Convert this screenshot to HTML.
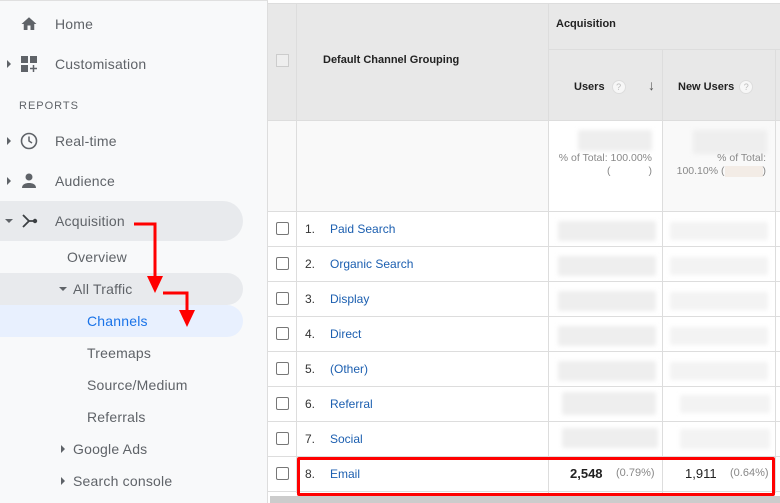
<!DOCTYPE html>
<html><head><meta charset="utf-8"><style>
*{margin:0;padding:0;box-sizing:border-box}
body{width:780px;height:503px;overflow:hidden;background:#fff;font-family:"Liberation Sans",Arial,sans-serif;position:relative}
.sb{position:absolute;left:0;top:0;width:268px;height:503px;background:#f8f9fa;border-right:1px solid #ddd;border-top:1px solid #e0e0e0}
.t{position:absolute;font-size:14px;color:#5f6368;letter-spacing:.2px;white-space:nowrap}
.pill{position:absolute;left:0;width:243px;border-radius:0 20px 20px 0}
.tri{position:absolute;width:0;height:0}
.tr{border-top:4px solid transparent;border-bottom:4px solid transparent;border-left:4px solid #5f6368}
.td{border-left:4px solid transparent;border-right:4px solid transparent;border-top:4px solid #5f6368}
.a{position:absolute;font-size:12px}
.cb{position:absolute;left:276px;width:13px;height:13px;border:1.5px solid #777;border-radius:2px;background:#fff}
.blur{position:absolute;background:#eee;filter:blur(2px);border-radius:2px}
.hl{position:absolute;left:0;width:780px;height:1px;background:#ddd}
.vl{position:absolute;width:1px;background:#ddd}
.q{display:inline-block;width:14px;height:14px;border-radius:7px;background:#f7f7f7;border:1px solid #ddd;color:#bbb;font-size:9px;text-align:center;line-height:12px;font-weight:normal;vertical-align:middle}
</style></head><body>
<div class="sb"></div>
<div class="pill" style="top:201px;height:40px;background:#e8eaed"></div>
<div class="pill" style="top:273px;height:32px;background:#e8eaed"></div>
<div class="pill" style="top:305px;height:32px;background:#e8f0fe"></div>

<svg style="position:absolute;left:20px;top:15px" width="18" height="18" viewBox="0 0 24 24"><path d="M10 20v-6h4v6h5v-8h3L12 3 2 12h3v8z" fill="#5f6368"/></svg>
<div class="t" style="left:55px;top:16px">Home</div>
<div class="tri tr" style="left:7px;top:60px"></div>
<svg style="position:absolute;left:20px;top:55px" width="18" height="18" viewBox="0 0 18 18"><rect x="1" y="1" width="7" height="7" fill="#5f6368"/><rect x="10" y="1" width="7" height="7" fill="#5f6368"/><rect x="1" y="10" width="7" height="7" fill="#5f6368"/><path d="M13.5 10v7M10 13.5h7" stroke="#5f6368" stroke-width="1.5"/></svg>
<div class="t" style="left:55px;top:56px">Customisation</div>
<div class="t" style="left:19px;top:100px;font-size:11px;letter-spacing:1px">REPORTS</div>
<div class="tri tr" style="left:7px;top:137px"></div>
<svg style="position:absolute;left:20px;top:132px" width="18" height="18" viewBox="0 0 18 18"><circle cx="9" cy="9" r="7.5" fill="none" stroke="#5f6368" stroke-width="1.6"/><path d="M9 4.5V9l3 2" fill="none" stroke="#5f6368" stroke-width="1.5"/></svg>
<div class="t" style="left:55px;top:133px">Real-time</div>
<div class="tri tr" style="left:7px;top:177px"></div>
<svg style="position:absolute;left:20px;top:172px" width="18" height="18" viewBox="0 0 18 18"><circle cx="9" cy="5" r="3.5" fill="#5f6368"/><path d="M2 16c0-4 4-5 7-5s7 1 7 5z" fill="#5f6368"/></svg>
<div class="t" style="left:55px;top:173px">Audience</div>
<div class="tri td" style="left:5px;top:219px"></div>
<svg style="position:absolute;left:20px;top:212px" width="18" height="18" viewBox="0 0 18 18"><path d="M3 3l6 6-6 6M9 9h6" fill="none" stroke="#3c4043" stroke-width="1.8"/><circle cx="15" cy="9" r="2.2" fill="#3c4043"/></svg>
<div class="t" style="left:55px;top:213px">Acquisition</div>
<div class="t" style="left:67px;top:249px">Overview</div>
<div class="tri td" style="left:59px;top:287px"></div>
<div class="t" style="left:73px;top:281px">All Traffic</div>
<div class="t" style="left:87px;top:313px;color:#1a73e8">Channels</div>
<div class="t" style="left:87px;top:345px">Treemaps</div>
<div class="t" style="left:87px;top:377px">Source/Medium</div>
<div class="t" style="left:87px;top:409px">Referrals</div>
<div class="tri tr" style="left:61px;top:445px"></div>
<div class="t" style="left:73px;top:441px">Google Ads</div>
<div class="tri tr" style="left:61px;top:477px"></div>
<div class="t" style="left:73px;top:473px">Search console</div>

<svg style="position:absolute;left:0;top:0" width="268" height="503"><path d="M134 224H155V278" fill="none" stroke="#f00" stroke-width="3"/><path d="M147 276h16l-8 17z" fill="#f00"/><path d="M163 293H187V312" fill="none" stroke="#f00" stroke-width="3"/><path d="M179 310h16l-8 17z" fill="#f00"/></svg>

<div style="position:absolute;left:268px;top:3px;width:512px;height:117px;background:#e8e8e8"></div>
<div style="position:absolute;left:268px;top:120px;width:512px;height:91px;background:#f9f9f9"></div>
<div style="position:absolute;left:548px;top:120px;width:114px;height:91px;background:#fff"></div>
<div class="hl" style="left:268px;top:3px"></div>
<div class="hl" style="left:548px;top:49px;width:232px"></div>
<div class="hl" style="left:268px;top:120px"></div>
<div class="hl" style="left:268px;top:211px"></div>
<div class="hl" style="left:268px;top:246px"></div>
<div class="hl" style="left:268px;top:281px"></div>
<div class="hl" style="left:268px;top:316px"></div>
<div class="hl" style="left:268px;top:351px"></div>
<div class="hl" style="left:268px;top:386px"></div>
<div class="hl" style="left:268px;top:421px"></div>
<div class="hl" style="left:268px;top:456px"></div>
<div class="hl" style="left:268px;top:491px"></div>
<div class="vl" style="left:296px;top:3px;height:490px"></div>
<div class="vl" style="left:548px;top:3px;height:490px"></div>
<div class="vl" style="left:662px;top:49px;height:444px"></div>
<div class="vl" style="left:775px;top:49px;height:444px"></div>
<div style="position:absolute;left:270px;top:496px;width:510px;height:7px;background:#ccc"></div>
<div style="position:absolute;left:276px;top:54px;width:13px;height:13px;border:1px solid #ccc;background:#eee"></div>
<div class="a" style="left:323px;top:54px;font-weight:bold;color:#222;font-size:11px">Default Channel Grouping</div>
<div class="a" style="left:556px;top:18px;font-weight:bold;color:#222;font-size:11px">Acquisition</div>
<div class="a" style="left:574px;top:80px;font-weight:bold;color:#222;font-size:11px">Users <span class="q" style="margin-left:4px">?</span></div>
<div class="a" style="left:648px;top:77px;color:#555;font-size:14px;font-weight:bold">↓</div>
<div class="a" style="left:678px;top:80px;font-weight:bold;color:#222;font-size:11px">New Users <span class="q" style="margin-left:2px">?</span></div>
<div class="blur" style="left:578px;top:130px;width:74px;height:21px"></div>
<div class="blur" style="left:693px;top:130px;width:74px;height:24px"></div>
<div class="a" style="left:556px;top:152px;color:#888;font-size:10.5px;text-align:right;width:96px;line-height:13px">% of Total: 100.00%<br>(<span style="display:inline-block;width:38px"></span>)</div>
<div class="a" style="left:670px;top:152px;color:#888;font-size:10.5px;text-align:right;width:96px;line-height:13px">% of Total:<br>100.10% (<span style="display:inline-block;width:38px;background:#f3ece6;height:11px;vertical-align:middle"></span>)</div>

<div class="cb" style="top:222px"></div><div class="a" style="left:305px;top:222px;color:#333">1.</div><div class="a" style="left:330px;top:222px;color:#1c5fb0">Paid Search</div>
<div class="cb" style="top:257px"></div><div class="a" style="left:305px;top:257px;color:#333">2.</div><div class="a" style="left:330px;top:257px;color:#1c5fb0">Organic Search</div>
<div class="cb" style="top:292px"></div><div class="a" style="left:305px;top:292px;color:#333">3.</div><div class="a" style="left:330px;top:292px;color:#1c5fb0">Display</div>
<div class="cb" style="top:327px"></div><div class="a" style="left:305px;top:327px;color:#333">4.</div><div class="a" style="left:330px;top:327px;color:#1c5fb0">Direct</div>
<div class="cb" style="top:362px"></div><div class="a" style="left:305px;top:362px;color:#333">5.</div><div class="a" style="left:330px;top:362px;color:#1c5fb0">(Other)</div>
<div class="cb" style="top:397px"></div><div class="a" style="left:305px;top:397px;color:#333">6.</div><div class="a" style="left:330px;top:397px;color:#1c5fb0">Referral</div>
<div class="cb" style="top:432px"></div><div class="a" style="left:305px;top:432px;color:#333">7.</div><div class="a" style="left:330px;top:432px;color:#1c5fb0">Social</div>
<div class="cb" style="top:467px"></div><div class="a" style="left:305px;top:467px;color:#333">8.</div><div class="a" style="left:330px;top:467px;color:#1c5fb0">Email</div>

<div class="blur" style="left:558px;top:221px;width:98px;height:20px"></div><div class="blur" style="left:670px;top:222px;width:98px;height:18px;background:#f3f3f3"></div>
<div class="blur" style="left:558px;top:256px;width:98px;height:20px"></div><div class="blur" style="left:670px;top:257px;width:98px;height:18px;background:#f3f3f3"></div>
<div class="blur" style="left:558px;top:291px;width:98px;height:20px"></div><div class="blur" style="left:670px;top:292px;width:98px;height:18px;background:#f3f3f3"></div>
<div class="blur" style="left:558px;top:326px;width:98px;height:20px"></div><div class="blur" style="left:670px;top:327px;width:98px;height:18px;background:#f3f3f3"></div>
<div class="blur" style="left:558px;top:361px;width:98px;height:20px"></div><div class="blur" style="left:670px;top:362px;width:98px;height:18px;background:#f3f3f3"></div>
<div class="blur" style="left:562px;top:392px;width:94px;height:23px"></div><div class="blur" style="left:680px;top:395px;width:90px;height:18px;background:#f3f3f3"></div>
<div class="blur" style="left:562px;top:428px;width:96px;height:20px"></div><div class="blur" style="left:680px;top:429px;width:90px;height:20px;background:#f3f3f3"></div>

<div class="a" style="left:570px;top:466px;font-weight:bold;color:#222;font-size:13px">2,548</div>
<div class="a" style="left:616px;top:467px;color:#888;font-size:11px">(0.79%)</div>
<div class="a" style="left:685px;top:466px;color:#222;font-size:13px">1,911</div>
<div class="a" style="left:730px;top:467px;color:#888;font-size:11px">(0.64%)</div>
<div style="position:absolute;left:297px;top:457px;width:478px;height:39px;border:3px solid #f00;border-radius:2px"></div>
</body></html>
